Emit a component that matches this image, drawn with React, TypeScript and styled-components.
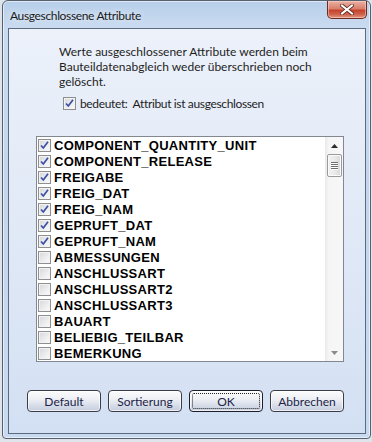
import styled, { createGlobalStyle } from "styled-components";

const GlobalStyle = createGlobalStyle`
  html, body {
    margin: 0;
    padding: 0;
    background: #dfe4ea;
  }
  * {
    box-sizing: border-box;
  }
`;

const attributes = [
  { name: "COMPONENT_QUANTITY_UNIT", checked: true },
  { name: "COMPONENT_RELEASE", checked: true },
  { name: "FREIGABE", checked: true },
  { name: "FREIG_DAT", checked: true },
  { name: "FREIG_NAM", checked: true },
  { name: "GEPRUFT_DAT", checked: true },
  { name: "GEPRUFT_NAM", checked: true },
  { name: "ABMESSUNGEN", checked: false },
  { name: "ANSCHLUSSART", checked: false },
  { name: "ANSCHLUSSART2", checked: false },
  { name: "ANSCHLUSSART3", checked: false },
  { name: "BAUART", checked: false },
  { name: "BELIEBIG_TEILBAR", checked: false },
  { name: "BEMERKUNG", checked: false },
];

const buttons = ["Default", "Sortierung", "OK", "Abbrechen"];

function CheckBox({ checked }: { checked: boolean }) {
  return (
    <Box>
      {checked && (
        <svg width="11" height="11" viewBox="0 0 11 11">
          <path d="M2 5.5 L4.3 8 L9 1.8" fill="none" stroke="#3a50a4" strokeWidth="1.7" />
        </svg>
      )}
    </Box>
  );
}

function App() {
  return (
    <>
      <GlobalStyle />
      <Desktop>
        <Window>
          <TitleBar>
            <Title>Ausgeschlossene Attribute</Title>
            <CloseButton>
              <svg width="14" height="11" viewBox="0 0 14 11">
                <path d="M2 1.5 L12 9.5 M12 1.5 L2 9.5" stroke="#5a2a22" strokeWidth="3.6" strokeLinecap="square" />
                <path d="M2 1.5 L12 9.5 M12 1.5 L2 9.5" stroke="#ffffff" strokeWidth="2" strokeLinecap="square" />
              </svg>
            </CloseButton>
          </TitleBar>
          <Client>
            <Description>
              Werte ausgeschlossener Attribute werden beim
              <br />
              Bauteildatenabgleich weder überschrieben noch
              <br />
              gelöscht.
            </Description>
            <LegendRow>
              <CheckBox checked />
              <LegendText>bedeutet:  Attribut ist ausgeschlossen</LegendText>
            </LegendRow>
            <ListBox>
              <Items>
                {attributes.map((a) => (
                  <Item key={a.name}>
                    <CheckBox checked={a.checked} />
                    <ItemLabel>{a.name}</ItemLabel>
                  </Item>
                ))}
              </Items>
              <ScrollBar>
                <ScrollArrow>
                  <svg width="7" height="4" viewBox="0 0 7 4">
                    <path d="M0 4 L3.5 0 L7 4 Z" fill="#2a2a2a" />
                  </svg>
                </ScrollArrow>
                <Thumb>
                  <Grip />
                  <Grip />
                  <Grip />
                  <Grip />
                </Thumb>
                <Track />
                <ScrollArrow>
                  <svg width="7" height="4" viewBox="0 0 7 4">
                    <path d="M0 0 L7 0 L3.5 4 Z" fill="#8a8a8a" />
                  </svg>
                </ScrollArrow>
              </ScrollBar>
            </ListBox>
            <ButtonRow>
              {buttons.map((b) => (
                <Button key={b} $isDefault={b === "OK"}>
                  {b === "OK" && <FocusRect />}
                  {b}
                </Button>
              ))}
            </ButtonRow>
          </Client>
        </Window>
      </Desktop>
    </>
  );
}

export default App;

const Desktop = styled.div`
  width: 372px;
  height: 442px;
  padding: 0 1px 3px 2px;
  overflow: hidden;
`;

const Window = styled.div`
  width: 369px;
  height: 439px;
  display: flex;
  flex-direction: column;
  padding: 0 4px 4px 5px;
  border: 1px solid #56606e;
  border-radius: 6px 6px 4px 4px;
  background: linear-gradient(180deg, #b7cfea 0%, #c9dbf0 6%, #c3d6ee 40%, #c8daf0 100%);
  box-shadow: inset 0 0 0 1px rgba(255, 255, 255, 0.55);
`;

const TitleBar = styled.div`
  height: 27px;
  display: flex;
  align-items: flex-start;
  justify-content: space-between;
`;

const Title = styled.span`
  margin: 7px 0 0 2px;
  font-family: Lato, "Noto Sans", sans-serif;
  font-size: 12px;
  line-height: 15px;
  letter-spacing: -0.35px;
  color: #1a1a1a;
  text-shadow: 0 0 6px rgba(255, 255, 255, 0.9);
`;

const CloseButton = styled.div`
  width: 40px;
  height: 18px;
  margin-right: -1px;
  display: flex;
  align-items: center;
  justify-content: center;
  border: 1px solid #6b2b20;
  border-top: none;
  border-radius: 0 0 5px 5px;
  background: linear-gradient(180deg, #eab0a3 0%, #d9806d 45%, #c6422b 55%, #d0654f 80%, #e49a85 100%);
  box-shadow: inset 0 0 0 1px rgba(255, 220, 210, 0.5);
`;

const Client = styled.div`
  flex: 1;
  display: flex;
  flex-direction: column;
  border: 1px solid #5d6b7e;
  background: linear-gradient(180deg, #ecf1fa 0%, #e2eaf7 45%, #d3e0f3 100%);
`;

const Description = styled.div`
  margin: 15px 0 0 50px;
  font-family: Lato, "Noto Sans", sans-serif;
  font-size: 12px;
  line-height: 15px;
  color: #1e1e1e;
`;

const LegendRow = styled.div`
  margin: 7px 0 0 54px;
  height: 14px;
  display: flex;
  align-items: center;
  gap: 4px;
`;

const LegendText = styled.span`
  font-family: Lato, "Noto Sans", sans-serif;
  font-size: 12px;
  letter-spacing: -0.35px;
  color: #1e1e1e;
  white-space: pre;
`;

const Box = styled.span`
  width: 13px;
  height: 13px;
  flex: none;
  display: flex;
  align-items: center;
  justify-content: center;
  border: 1px solid #8f8f8f;
  background: linear-gradient(135deg, #d3d6da 0%, #e9eaec 50%, #fbfbfb 100%);
  box-shadow: inset 0 0 0 1px #f3f3f3;
`;

const ListBox = styled.div`
  margin: 26px 0 0 27px;
  width: 308px;
  height: 226px;
  display: flex;
  border: 1px solid #828790;
  background: #ffffff;
`;

const Items = styled.div`
  flex: 1;
  padding-left: 1px;
`;

const Item = styled.div`
  height: 16px;
  display: flex;
  align-items: center;
  gap: 3px;
`;

const ItemLabel = styled.span`
  font-family: "Liberation Sans", Arial, sans-serif;
  font-weight: bold;
  font-size: 13px;
  letter-spacing: 0.3px;
  color: #000000;
`;

const ScrollBar = styled.div`
  width: 18px;
  display: flex;
  flex-direction: column;
  align-items: center;
  background: linear-gradient(90deg, #e9e9e9 0%, #f5f5f5 20%, #f7f7f7 100%);
`;

const ScrollArrow = styled.div`
  width: 17px;
  height: 17px;
  flex: none;
  display: flex;
  align-items: center;
  justify-content: center;
`;

const Thumb = styled.div`
  width: 15px;
  height: 23px;
  display: flex;
  flex-direction: column;
  align-items: center;
  justify-content: center;
  gap: 1px;
  border: 1px solid #9a9a9a;
  border-radius: 2px;
  background: linear-gradient(90deg, #f2f2f2 0%, #eaeaea 50%, #d8d8d8 100%);
  box-shadow: inset 0 0 0 1px #fbfbfb;
`;

const Grip = styled.span`
  width: 7px;
  height: 1px;
  background: #6e6e6e;
  box-shadow: 0 1px 0 #ffffff;
`;

const Track = styled.div`
  flex: 1;
`;

const ButtonRow = styled.div`
  margin: 28px 0 0 18px;
  display: flex;
  gap: 7px;
`;

const Button = styled.div<{ $isDefault: boolean }>`
  position: relative;
  width: 74px;
  height: 22px;
  display: flex;
  align-items: center;
  justify-content: center;
  border: 1px solid ${(p) => (p.$isDefault ? "#1e1e2a" : "#3a3d46")};
  border-radius: 4px;
  background: linear-gradient(180deg, #fbfbfc 0%, #eef0f5 40%, #d8dee9 70%, #c4cde0 100%);
  box-shadow: inset 0 0 0 1px rgba(255, 255, 255, 0.7);
  font-family: Lato, "Noto Sans", sans-serif;
  font-size: 12px;
  color: #1c2348;
`;

const FocusRect = styled.span`
  position: absolute;
  inset: 2px;
  border: 1px dotted #222222;
  border-radius: 2px;
`;
